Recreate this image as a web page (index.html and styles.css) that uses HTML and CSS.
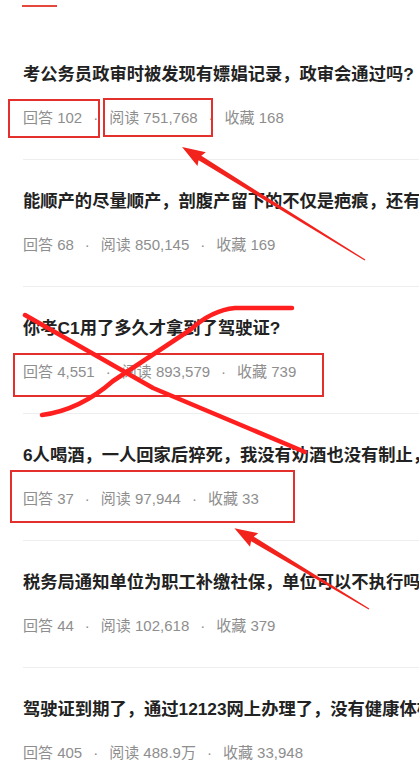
FILE: index.html
```html
<!DOCTYPE html>
<html lang="zh-CN">
<head>
    <meta charset="UTF-8">
    <meta name="viewport" content="width=device-width, initial-scale=1.0">
    <title>问答列表</title>
    <link rel="stylesheet" href="styles.css">
</head>
<body>
<div class="page">
    <div class="tabs">
        <div class="tab-line"></div>
    </div>
    <ul class="question-list">
        <li class="question">
            <div class="question-title">考公务员政审时被发现有嫖娼记录，政审会通过吗?</div>
            <div class="question-stats">
                <span>回答 102</span><span class="dot">·</span><span>阅读 751,768</span><span class="dot">·</span><span>收藏 168</span>
            </div>
        </li>
        <li class="question">
            <div class="question-title">能顺产的尽量顺产，剖腹产留下的不仅是疤痕，还有哪些后遗症?</div>
            <div class="question-stats">
                <span>回答 68</span><span class="dot">·</span><span>阅读 850,145</span><span class="dot">·</span><span>收藏 169</span>
            </div>
        </li>
        <li class="question">
            <div class="question-title">你考C1用了多久才拿到了驾驶证?</div>
            <div class="question-stats">
                <span>回答 4,551</span><span class="dot">·</span><span>阅读 893,579</span><span class="dot">·</span><span>收藏 739</span>
            </div>
        </li>
        <li class="question">
            <div class="question-title">6人喝酒，一人回家后猝死，我没有劝酒也没有制止，需要承担责任吗?</div>
            <div class="question-stats">
                <span>回答 37</span><span class="dot">·</span><span>阅读 97,944</span><span class="dot">·</span><span>收藏 33</span>
            </div>
        </li>
        <li class="question">
            <div class="question-title">税务局通知单位为职工补缴社保，单位可以不执行吗?</div>
            <div class="question-stats">
                <span>回答 44</span><span class="dot">·</span><span>阅读 102,618</span><span class="dot">·</span><span>收藏 379</span>
            </div>
        </li>
        <li class="question">
            <div class="question-title">驾驶证到期了，通过12123网上办理了，没有健康体检怎么办?</div>
            <div class="question-stats">
                <span>回答 405</span><span class="dot">·</span><span>阅读 488.9万</span><span class="dot">·</span><span>收藏 33,948</span>
            </div>
        </li>
    </ul>

    <!-- red marks drawn over the screenshot -->
    <svg class="marks" width="419" height="769" viewBox="0 0 419 769">
        <g class="box">
            <rect x="9" y="100" width="90" height="37"/>
            <rect x="104" y="99" width="108" height="37"/>
            <rect x="14" y="354" width="309" height="42"/>
            <rect x="11" y="471" width="283" height="51"/>
        </g>
        <g class="arrow">
            <polygon transform="translate(365 260) rotate(211.7)" points="0,-0.6 194,-2.6 192,-8 215,0 192,8 194,2.6 0,0.6"/>
            <polygon transform="translate(369 609) rotate(211)" points="0,-0.6 136,-2.6 134,-8 157,0 134,8 136,2.6 0,0.6"/>
        </g>
        <g class="cross">
            <path d="M25 315 L153 388 L305 452"/>
            <path d="M42 415 Q80 410 113 381 L190 330 Q212 310 235 308 L292 308"/>
        </g>
    </svg>
</div>
</body>
</html>
```
FILE: styles.css
```css
body {
    margin: 0;
    background-color: #fff;
    font-family: "Liberation Sans", Arial, "Noto Sans CJK SC", sans-serif;
    overflow: hidden;
}
.page {
    position: relative;
    width: 419px;
    height: 769px;
    overflow: hidden;
}
.tabs {
    height: 33px;
    padding: 5px 0 0 22px;
    box-sizing: border-box;
}
.tab-line {
    width: 35px;
    height: 2px;
    background-color: #e5473d;
}
.question-list {
    list-style: none;
    margin: 0 0 0 23px;
    padding: 0;
}
.question {
    padding: 29px 0 30px;
    border-bottom: 1px solid #eee;
}
.question-title {
    font-size: 17.3px;
    line-height: 24px;
    font-weight: bold;
    color: #222;
    white-space: nowrap;
    overflow: hidden;
}
.question-stats {
    margin-top: 21px;
    font-size: 15px;
    line-height: 22px;
    color: #8e8e8e;
    white-space: nowrap;
}
.dot {
    margin: 0 11px;
}
.marks {
    position: absolute;
    top: 0;
    left: 0;
    pointer-events: none;
}
.box rect {
    fill: none;
    stroke: #e3302c;
    stroke-width: 2;
}
.arrow polygon {
    fill: #f2231d;
}
.cross path {
    fill: none;
    stroke: #ff1f1f;
    stroke-width: 4.5;
    stroke-linecap: round;
    stroke-linejoin: round;
}
```
